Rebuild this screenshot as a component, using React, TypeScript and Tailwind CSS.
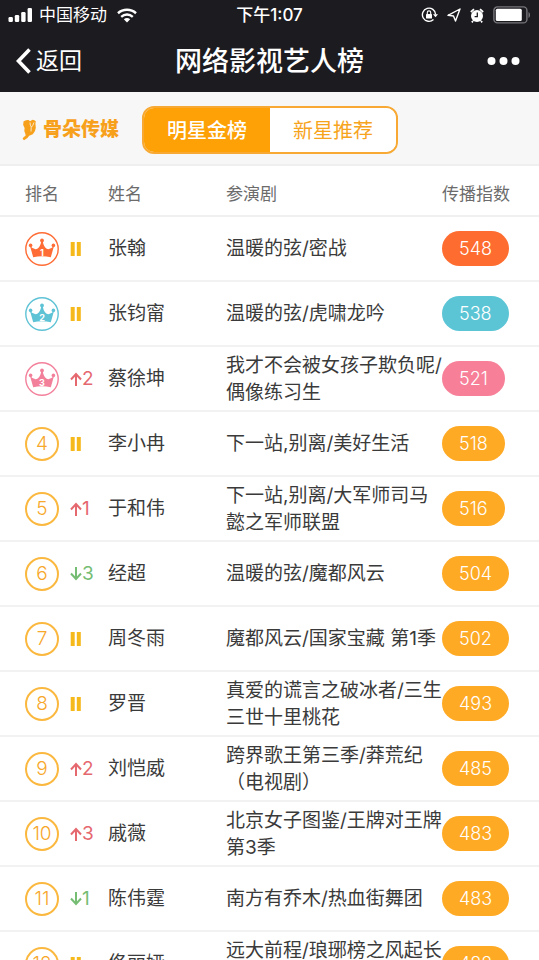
import { useState } from "react";

type Artist = {
  rank: number;
  trend: number;
  name: string;
  works: string;
  score: number;
};

const artists: Artist[] = [
  { rank: 1, trend: 0, name: "张翰", works: "温暖的弦/密战", score: 548 },
  { rank: 2, trend: 0, name: "张钧甯", works: "温暖的弦/虎啸龙吟", score: 538 },
  { rank: 3, trend: 2, name: "蔡徐坤", works: "我才不会被女孩子欺负呢/\n偶像练习生", score: 521 },
  { rank: 4, trend: 0, name: "李小冉", works: "下一站,别离/美好生活", score: 518 },
  { rank: 5, trend: 1, name: "于和伟", works: "下一站,别离/大军师司马\n懿之军师联盟", score: 516 },
  { rank: 6, trend: -3, name: "经超", works: "温暖的弦/魔都风云", score: 504 },
  { rank: 7, trend: 0, name: "周冬雨", works: "魔都风云/国家宝藏 第1季", score: 502 },
  { rank: 8, trend: 0, name: "罗晋", works: "真爱的谎言之破冰者/三生\n三世十里桃花", score: 493 },
  { rank: 9, trend: 2, name: "刘恺威", works: "跨界歌王第三季/莽荒纪\n（电视剧）", score: 485 },
  { rank: 10, trend: 3, name: "戚薇", works: "北京女子图鉴/王牌对王牌\n第3季", score: 483 },
  { rank: 11, trend: -1, name: "陈伟霆", works: "南方有乔木/热血街舞团", score: 483 },
  { rank: 12, trend: 0, name: "佟丽娅", works: "远大前程/琅琊榜之风起长\n林", score: 482 },
];

const scoreColors: Record<number, string> = {
  1: "bg-[#ff6c2f]",
  2: "bg-[#5bc5d5]",
  3: "bg-[#f77f98]",
};

const crownColors: Record<number, string> = {
  1: "text-[#ff6c35]",
  2: "text-[#5fc3d6]",
  3: "text-[#f3809b]",
};

function StatusBar() {
  return (
    <div className="grid grid-cols-3 items-center h-[30px] px-2 text-[17px] leading-none">
      <div className="flex items-center gap-[6px]">
        <svg width="25" height="16" viewBox="0 0 25 16" fill="currentColor" aria-hidden="true">
          <rect x="0.5" y="10" width="4.4" height="5" rx="1.3" />
          <rect x="6.8" y="8" width="4.4" height="7" rx="1.3" />
          <rect x="13.2" y="5" width="4.4" height="10" rx="1.3" />
          <rect x="19.6" y="1" width="4.4" height="14" rx="1.3" />
        </svg>
        <span>中国移动</span>
        <svg className="ml-1" width="20" height="15" viewBox="0 0 20 15" fill="none" stroke="currentColor" aria-hidden="true">
          <path d="M1 5.2C6 .7 14 .7 19 5.2" strokeWidth="2.5" />
          <path d="M4.200 8.800c3.400-3 8.200-3 11.600 0" strokeWidth="2.4" />
          <path d="M6.800 11.200c2-1.700 4.400-1.700 6.400 0L10 14.600z" fill="currentColor" stroke="none" />
        </svg>
      </div>
      <div className="text-center font-medium">下午1:07</div>
      <div className="flex items-center justify-end">
        <svg width="17" height="16" viewBox="0 0 17 16" fill="none" stroke="currentColor" aria-hidden="true">
          <path d="M12.500 12.600A6.600 6.600 0 1 1 14.600 7.500" strokeWidth="1.4" />
          <path d="M12 7.200h5l-2.500 3z" fill="currentColor" stroke="none" />
          <rect x="5" y="7" width="6" height="4.6" rx=".6" fill="currentColor" stroke="none" />
          <path d="M6.300 7V5.600a1.700 1.700 0 0 1 3.400 0V7" strokeWidth="1.1" />
        </svg>
        <svg className="ml-[9px]" width="14" height="14" viewBox="0 0 14 14" fill="none" stroke="currentColor" strokeWidth="1.4" strokeLinejoin="round" aria-hidden="true">
          <path d="M13 1 1 7.300l5.500.7 2 5z" />
        </svg>
        <svg className="ml-[9px]" width="14" height="15" viewBox="0 0 14 15" aria-hidden="true">
          <circle cx="7" cy="8" r="6" fill="currentColor" />
          <path d="M.8 4 4 1.200M13.200 4 10 1.200M3 13l-1.200 1.400M11 13l1.200 1.400" stroke="currentColor" strokeWidth="1.7" />
          <path d="M7.300 4.600v4H4.600" fill="none" stroke="#1c1b20" strokeWidth="1.3" />
        </svg>
        <svg className="ml-[9px]" width="38" height="18" viewBox="0 0 38 18" aria-hidden="true">
          <rect x=".9" y=".9" width="33" height="16" rx="3.5" fill="none" stroke="#77767a" strokeWidth="1.4" />
          <rect x="2.8" y="2.8" width="26" height="12.2" rx="1.5" fill="currentColor" />
          <path d="M35.500 6c2 .8 2 5.200 0 6z" fill="#77767a" />
        </svg>
      </div>
    </div>
  );
}

function NavBar() {
  return (
    <div className="grid grid-cols-[1fr_auto_1fr] items-center h-[62px] px-4">
      <button type="button" className="flex items-center gap-[5px] text-[23px] leading-none">
        <svg width="15" height="26" viewBox="0 0 15 26" fill="none" stroke="currentColor" strokeWidth="3.6" aria-hidden="true">
          <path d="M13.500 1.500 2.500 13l11 11.500" />
        </svg>
        返回
      </button>
      <h1 className="text-[27px] leading-none font-medium">网络影视艺人榜</h1>
      <button type="button" aria-label="更多" className="justify-self-end">
        <svg width="36" height="10" viewBox="0 0 36 10" fill="currentColor" aria-hidden="true">
          <circle cx="4.5" cy="5" r="4" />
          <circle cx="16.5" cy="5" r="4" />
          <circle cx="28.5" cy="5" r="4" />
        </svg>
      </button>
    </div>
  );
}

function Logo() {
  return (
    <div className="flex items-center gap-[6px] text-[#f7a01b]">
      <svg width="15" height="22" viewBox="0 0 15 22" aria-hidden="true">
        <path d="M1.500 2.500Q3.500.6 6.500 1L8 2.200 10.500.8q2 .2 3.300 1.400l-.4 2.600.4 4q-.3 4-3 6.400l-3.600 1.600q-1.200 2.600-5.200 4.400l-1.400-1.400q.8-1.800 3-3L3.400 15Q1.600 12 2.600 9L1.200 6z" fill="currentColor" />
        <path d="M8 3.500q0 3 1.400 4.600M12 3.500Q10.800 7 9.200 8.500L9 12.500" fill="none" stroke="#f7f7f7" strokeWidth=".8" />
      </svg>
      <span className="text-[19px] leading-none font-black">骨朵传媒</span>
    </div>
  );
}

function Crown({ rank }: { rank: number }) {
  return (
    <svg className={crownColors[rank]} width="34" height="34" viewBox="0 0 34 34" fill="currentColor" aria-hidden="true">
      <circle cx="17" cy="17" r="16.2" fill="none" stroke="currentColor" strokeWidth="1.4" />
      <path d="M5 14Q9.500 18.500 12.300 16.800 15.500 14.500 16.300 9h1.400q.8 5.500 4 7.800Q24.500 18.500 29 14L25.800 25.200Q17 23.200 8.200 25.200z" />
      <circle cx="17" cy="8.4" r="1.9" />
      <circle cx="5.600" cy="13.4" r="1.8" />
      <circle cx="28.400" cy="13.4" r="1.8" />
      <text x="17" y="23.5" textAnchor="middle" fontSize="9" fontWeight="700" fill="#fff">{rank}</text>
    </svg>
  );
}

function RankBadge({ rank }: { rank: number }) {
  if (rank <= 3) {
    return <Crown rank={rank} />;
  }
  return (
    <span className="flex items-center justify-center size-[34px] rounded-full border-2 border-[#fbb83f] text-[19px] leading-none font-light text-[#f7a72a]">
      {rank}
    </span>
  );
}

function Trend({ value }: { value: number }) {
  if (value === 0) {
    return (
      <svg width="12" height="14" viewBox="0 0 12 14" fill="#f5b91c" role="img" aria-label="持平">
        <rect x="0.7" width="4" height="14" />
        <rect x="6.800" width="4" height="14" />
      </svg>
    );
  }
  const up = value > 0;
  return (
    <span className={`flex items-center text-[19px] leading-none ${up ? "text-[#e5686f]" : "text-[#76bd74]"}`}>
      <svg width="12" height="14" viewBox="0 0 12 14" fill="none" stroke="currentColor" strokeWidth="2" aria-hidden="true">
        <path d={up ? "M6 14V2M1 7.500 6 2l5 5.500" : "M6 0v12M1 6.500 6 12l5-5.500"} />
      </svg>
      {Math.abs(value)}
    </span>
  );
}

export default function App() {
  const [tab, setTab] = useState<"star" | "new">("star");

  const tabClass = (active: boolean) =>
    `w-[126px] pt-[2px] text-[20px] leading-none ${active ? "bg-[#fea107] text-white font-medium" : "bg-white text-[#f7a41d]"}`;

  return (
    <div className="h-screen overflow-hidden bg-white text-[#3a3a3a] font-['Inter','Noto_Sans_CJK_SC',sans-serif]">
      <header className="bg-[#1c1b20] text-white">
        <StatusBar />
        <NavBar />
      </header>

      <div className="flex items-center gap-[23px] h-[74px] pt-[3px] pl-[22px] bg-[#f7f7f7] border-b-2 border-[#efefef]">
        <Logo />
        <div className="flex h-12 rounded-xl border-2 border-[#f7a933] overflow-hidden">
          <button type="button" className={tabClass(tab === "star")} onClick={() => setTab("star")}>
            明星金榜
          </button>
          <button type="button" className={tabClass(tab === "new")} onClick={() => setTab("new")}>
            新星推荐
          </button>
        </div>
      </div>

      <table className="w-full table-fixed border-collapse text-left">
        <thead>
          <tr className="h-[50px] border-b-2 border-[#f0f0f0] text-[17px] leading-none text-[#6b6b6b]">
            <th className="w-[108px] p-0 pt-2 pl-[25px] font-normal">排名</th>
            <th className="w-[118px] p-0 pt-2 font-normal">姓名</th>
            <th className="p-0 pt-2 font-normal">参演剧</th>
            <th className="w-[97px] p-0 pt-2 font-normal">传播指数</th>
          </tr>
        </thead>
        <tbody className="text-[19px] leading-[27px]">
          {artists.map((artist) => (
            <tr key={artist.rank} className="h-[65px] border-b-2 border-[#f2f2f2]">
              <td className="p-0 pl-[25px]">
                <div className="flex items-center gap-[11px]">
                  <RankBadge rank={artist.rank} />
                  <Trend value={artist.trend} />
                </div>
              </td>
              <td className="p-0">{artist.name}</td>
              <td className="p-0 whitespace-pre">{artist.works}</td>
              <td className="p-0">
                <span
                  className={`inline-flex items-center h-[35px] px-[17px] rounded-full text-[18px] font-light text-white align-middle ${scoreColors[artist.rank] ?? "bg-[#ffaa25]"}`}
                >
                  {artist.score}
                </span>
              </td>
            </tr>
          ))}
        </tbody>
      </table>
    </div>
  );
}
